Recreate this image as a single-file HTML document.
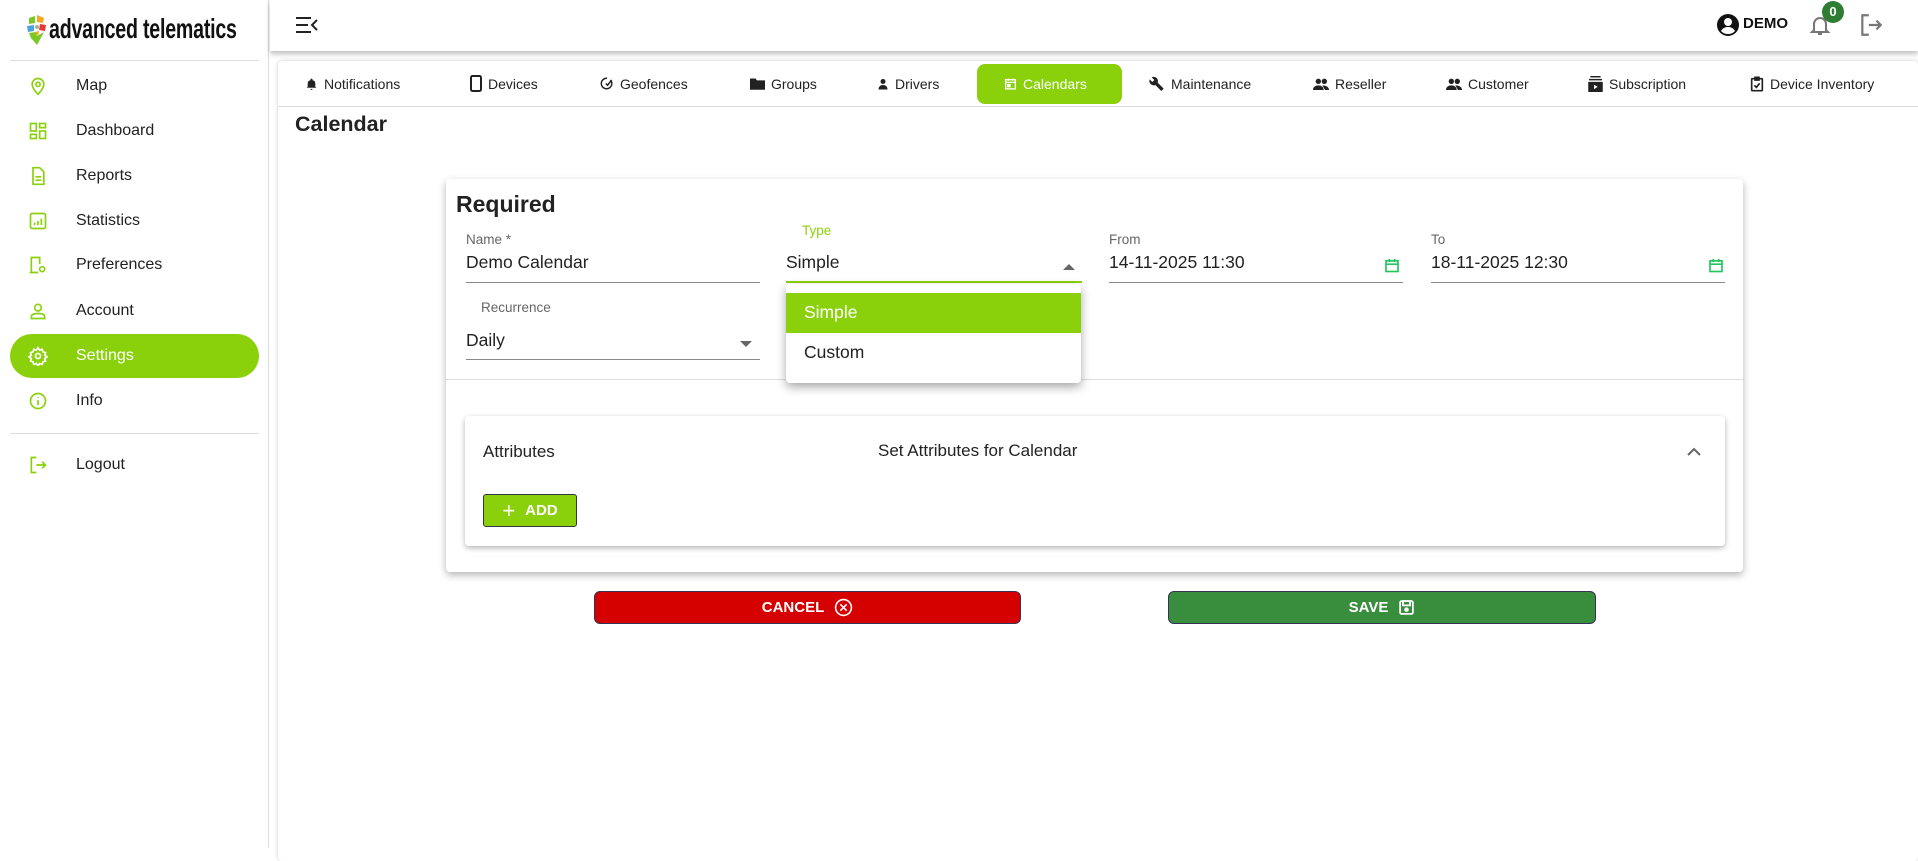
<!DOCTYPE html>
<html><head><meta charset="utf-8"><style>
*{box-sizing:border-box;margin:0;padding:0}
body{width:1918px;height:848px;overflow:hidden;background:#fff;font-family:"Liberation Sans",sans-serif;color:#222;position:relative}
.abs{position:absolute}
.side{left:0;top:0;width:269px;height:848px;border-right:1px solid #ddd;background:#fff}
.mi{position:absolute;left:0;width:269px;height:44px;display:flex;align-items:center;font-size:16px;color:#222}
.mi svg{position:absolute;left:28px}
.mi span{position:absolute;left:76px}
.hdr{left:270px;top:0;width:1648px;height:51px;background:#fff;box-shadow:0 3px 5px rgba(0,0,0,.25)}
.panel{left:278px;top:61px;width:1640px;height:800px;background:#fff;box-shadow:0 0 4px rgba(0,0,0,.2);border-radius:4px}
.tab{position:absolute;top:0;height:45px;display:flex;align-items:center;font-size:14px;color:#222;gap:6px}
.lbl{position:absolute;font-size:13.5px;color:#666}
.val{position:absolute;font-size:17.5px;color:#222}
.ul{position:absolute;height:1px;background:#888}
</style></head><body>
<div class="abs side">
 <div class="abs" style="left:27px;top:14px">
  <svg width="20" height="32" viewBox="0 0 20 32"><path d="M2 4 L8 2 L8 9 L2 10Z" fill="#7cc823"/><path d="M10 1 L17 4 L16 9 L10 8Z" fill="#f5a623"/><path d="M0 12 L7 11 L7 17 L1 18Z" fill="#4aa3df"/><path d="M13 10 L19 11 L18 17 L12 16Z" fill="#e53935"/><circle cx="10" cy="13" r="2" fill="#aaa"/><path d="M2 19 L9 18 L10 22 L17 18 L10 31 L4 24Z" fill="#7cc823"/><path d="M8 18 L12 17 L11 22Z" fill="#f5a623"/></svg>
 </div>
 <div class="abs" style="left:49px;top:13px;font-size:28px;font-weight:bold;color:#111;transform:scaleX(.7);transform-origin:left;letter-spacing:-.3px;white-space:nowrap">advanced telematics</div>
 <div class="abs" style="left:10px;top:60px;width:249px;height:1px;background:#ddd"></div>
 <div class="mi" style="top:64px"><svg width="20" height="20" viewBox="0 0 24 24" fill="none" stroke="#8bd10b" stroke-width="2"><path d="M12 22s7-7 7-12a7 7 0 0 0-14 0c0 5 7 12 7 12z"/><circle cx="12" cy="10" r="2.5"/></svg><span>Map</span></div>
 <div class="mi" style="top:109px"><svg width="20" height="20" viewBox="0 0 24 24" fill="none" stroke="#8bd10b" stroke-width="2"><rect x="3" y="3" width="7" height="9"/><rect x="14" y="3" width="7" height="5"/><rect x="14" y="12" width="7" height="9"/><rect x="3" y="16" width="7" height="5"/></svg><span>Dashboard</span></div>
 <div class="mi" style="top:154px"><svg width="20" height="20" viewBox="0 0 24 24" fill="none" stroke="#8bd10b" stroke-width="2"><path d="M6 2h8l5 5v15H6z"/><path d="M9 13h7M9 17h7"/></svg><span>Reports</span></div>
 <div class="mi" style="top:199px"><svg width="20" height="20" viewBox="0 0 24 24" fill="none" stroke="#8bd10b" stroke-width="2"><rect x="3" y="3" width="18" height="18" rx="2"/><path d="M8 17v-3M12 17v-5M16 17V9"/></svg><span>Statistics</span></div>
 <div class="mi" style="top:243px"><svg width="20" height="20" viewBox="0 0 24 24" fill="none" stroke="#8bd10b" stroke-width="2"><path d="M4 21V3h10v8M2 21h10"/><circle cx="17" cy="17" r="3"/></svg><span>Preferences</span></div>
 <div class="mi" style="top:289px"><svg width="20" height="20" viewBox="0 0 24 24" fill="none" stroke="#8bd10b" stroke-width="2"><circle cx="12" cy="8" r="4"/><path d="M4 21v-2c0-3 4-4 8-4s8 1 8 4v2z"/></svg><span>Account</span></div>
 <div class="abs" style="left:10px;top:334px;width:249px;height:44px;background:#8bd10b;border-radius:22px"></div>
 <div class="mi" style="top:334px;color:#fff"><svg width="20" height="20" viewBox="0 0 24 24" fill="none" stroke="#fff" stroke-width="2"><circle cx="12" cy="12" r="3"/><path d="M12 2l2 3 3-1 1 3 3 1-1 3 3 2-3 2 1 3-3 1-1 3-3-1-2 3-2-3-3 1-1-3-3-1 1-3-3-2 3-2-1-3 3-1 1-3 3 1z"/></svg><span>Settings</span></div>
 <div class="mi" style="top:379px"><svg width="20" height="20" viewBox="0 0 24 24" fill="none" stroke="#8bd10b" stroke-width="2"><circle cx="12" cy="12" r="9"/><path d="M12 11v6M12 7v1"/></svg><span>Info</span></div>
 <div class="abs" style="left:10px;top:433px;width:249px;height:1px;background:#ddd"></div>
 <div class="mi" style="top:443px"><svg width="20" height="20" viewBox="0 0 24 24" fill="none" stroke="#8bd10b" stroke-width="2"><path d="M10 3H4v18h6M10 12h11M17 8l4 4-4 4"/></svg><span>Logout</span></div>
</div>
<div class="abs hdr">
 <svg class="abs" style="left:25px;top:16px" width="24" height="18" viewBox="0 0 24 18" fill="none" stroke="#222" stroke-width="2"><path d="M1 2h15M1 9h12M1 16h15M22 4l-5 5 5 5"/></svg>
 <svg class="abs" style="left:1446px;top:13px" width="24" height="24" viewBox="0 0 24 24"><circle cx="12" cy="12" r="11" fill="#111"/><circle cx="12" cy="9" r="4" fill="#fff"/><path d="M5 18c2-3 4-4 7-4s5 1 7 4c-2 2-4 3-7 3s-5-1-7-3z" fill="#fff"/></svg>
 <div class="abs" style="left:1473px;top:15px;font-size:15px;font-weight:bold;color:#111">DEMO</div>
 <svg class="abs" style="left:1538px;top:13px" width="24" height="24" viewBox="0 0 24 24" fill="none" stroke="#777" stroke-width="2"><path d="M6 17V11a6 6 0 0 1 12 0v6l2 2H4z"/><path d="M10 21h4"/></svg>
 <div class="abs" style="left:1552px;top:1px;width:22px;height:22px;border-radius:11px;background:#2e7d32;color:#fff;font-size:13px;font-weight:bold;text-align:center;line-height:22px">0</div>
 <svg class="abs" style="left:1588px;top:12px" width="26" height="26" viewBox="0 0 24 24" fill="none" stroke="#777" stroke-width="2"><path d="M10 3H4v18h6M10 12h11M17 8l4 4-4 4"/></svg>
</div>
<div class="abs panel">
 <div class="abs" style="left:0;top:45px;width:1640px;height:1px;background:#ddd"></div>
 <div class="abs" style="left:699px;top:3px;width:145px;height:40px;background:#8bd10b;border-radius:8px"></div>
 <div class="tab" style="left:27px"><svg width="13" height="14" viewBox="0 0 24 24"><path d="M12 2a2 2 0 0 0-2 2v1a6 6 0 0 0-5 6v6l-2 2h18l-2-2v-6a6 6 0 0 0-5-6V4a2 2 0 0 0-2-2zM10 21h4a2 2 0 0 1-4 0z" fill="#222"/></svg>Notifications</div>
 <div class="tab" style="left:192px"><svg width="12" height="17" viewBox="0 0 12 17" fill="none" stroke="#222" stroke-width="2"><rect x="1" y="1" width="10" height="15" rx="1.5"/></svg>Devices</div>
 <div class="tab" style="left:322px"><svg width="14" height="15" viewBox="0 0 24 24" fill="none" stroke="#222" stroke-width="2.5"><path d="M12 3a9 9 0 1 0 6 3M10 12l3 3 7-9"/></svg>Geofences</div>
 <div class="tab" style="left:472px"><svg width="15" height="13" viewBox="0 0 24 20"><path d="M0 2h9l2 3h13v15H0z" fill="#222"/></svg>Groups</div>
 <div class="tab" style="left:599px"><svg width="12" height="14" viewBox="0 0 24 24"><circle cx="12" cy="7" r="5" fill="#222"/><path d="M3 23c0-6 4-9 9-9s9 3 9 9z" fill="#222"/></svg>Drivers</div>
 <div class="tab" style="left:726px;color:#fff"><svg width="13" height="14" viewBox="0 0 24 24" fill="none" stroke="#fff" stroke-width="2.5"><rect x="3" y="4" width="18" height="17"/><path d="M3 9h18M8 2v4M16 2v4"/><rect x="7" y="13" width="4" height="4" fill="#fff"/></svg>Calendars</div>
 <div class="tab" style="left:871px"><svg width="16" height="16" viewBox="0 0 24 24"><path d="M22 19l-9-9c1-2 .5-5-1.5-7S6 1 4 2l4 4-3 3-4-4c-1 2-.5 5 1.5 7s5 2.5 7 1.5l9 9z" fill="#222"/></svg>Maintenance</div>
 <div class="tab" style="left:1035px"><svg width="16" height="12" viewBox="0 0 24 18"><circle cx="8" cy="5" r="4" fill="#222"/><circle cx="17" cy="5" r="4" fill="#222"/><path d="M0 18c0-5 4-7 8-7s8 2 8 7zM14 11c5 0 10 2 10 7h-6z" fill="#222"/></svg>Reseller</div>
 <div class="tab" style="left:1168px"><svg width="16" height="12" viewBox="0 0 24 18"><circle cx="8" cy="5" r="4" fill="#222"/><circle cx="17" cy="5" r="4" fill="#222"/><path d="M0 18c0-5 4-7 8-7s8 2 8 7zM14 11c5 0 10 2 10 7h-6z" fill="#222"/></svg>Customer</div>
 <div class="tab" style="left:1310px"><svg width="15" height="16" viewBox="0 0 20 22"><rect x="3" y="0" width="14" height="2" fill="#222"/><rect x="1" y="4" width="18" height="2" fill="#222"/><rect x="0" y="8" width="20" height="14" rx="1" fill="#222"/><path d="M8 12v6l5-3z" fill="#fff"/></svg>Subscription</div>
 <div class="tab" style="left:1472px"><svg width="14" height="16" viewBox="0 0 20 24" fill="none" stroke="#222" stroke-width="2.5"><rect x="2" y="4" width="16" height="18" rx="1"/><path d="M7 2h6v4H7zM6 14l3 3 5-6"/></svg>Device Inventory</div>
 <div class="abs" style="left:17px;top:51px;font-size:21.5px;font-weight:bold;color:#222">Calendar</div>
</div>
<div class="abs" style="left:446px;top:179px;width:1297px;height:393px;background:#fff;border-radius:4px;box-shadow:0 3px 8px rgba(0,0,0,.3)">
 <div class="abs" style="left:10px;top:12px;font-size:23px;font-weight:bold;color:#222">Required</div>
 <div class="lbl" style="left:20px;top:53px">Name *</div>
 <div class="val" style="left:20px;top:73px">Demo Calendar</div>
 <div class="ul" style="left:20px;top:103px;width:294px"></div>
 <div class="lbl" style="left:356px;top:44px;color:#8bd10b">Type</div>
 <div class="val" style="left:340px;top:73px">Simple</div>
 <svg class="abs" style="left:617px;top:84px" width="12" height="7"><path d="M0 7L6 1L12 7z" fill="#666"/></svg>
 <div class="abs" style="left:340px;top:102px;width:296px;height:2px;background:#8bd10b"></div>
 <div class="lbl" style="left:663px;top:53px">From</div>
 <div class="val" style="left:663px;top:73px">14-11-2025 11:30</div>
 <svg class="abs" style="left:938px;top:78px" width="16" height="17" viewBox="0 0 24 24" fill="none" stroke="#22c55e" stroke-width="2.5"><rect x="3" y="5" width="18" height="16"/><path d="M3 10h18M8 2v5M16 2v5"/></svg>
 <div class="ul" style="left:663px;top:103px;width:294px"></div>
 <div class="lbl" style="left:985px;top:53px">To</div>
 <div class="val" style="left:985px;top:73px">18-11-2025 12:30</div>
 <svg class="abs" style="left:1262px;top:78px" width="16" height="17" viewBox="0 0 24 24" fill="none" stroke="#22c55e" stroke-width="2.5"><rect x="3" y="5" width="18" height="16"/><path d="M3 10h18M8 2v5M16 2v5"/></svg>
 <div class="ul" style="left:985px;top:103px;width:294px"></div>
 <div class="lbl" style="left:35px;top:121px">Recurrence</div>
 <div class="val" style="left:20px;top:151px">Daily</div>
 <svg class="abs" style="left:294px;top:162px" width="12" height="7"><path d="M0 0L6 6L12 0z" fill="#666"/></svg>
 <div class="ul" style="left:20px;top:180px;width:294px"></div>
 <div class="abs" style="left:0;top:200px;width:1297px;height:1px;background:#ddd"></div>
 <div class="abs" style="left:19px;top:237px;width:1260px;height:130px;background:#fff;border-radius:4px;box-shadow:0 2px 6px rgba(0,0,0,.3)">
  <div class="abs" style="left:18px;top:26px;font-size:17px">Attributes</div>
  <div class="abs" style="left:413px;top:25px;font-size:17px">Set Attributes for Calendar</div>
  <svg class="abs" style="left:1222px;top:31px" width="14" height="9" viewBox="0 0 14 9" fill="none" stroke="#666" stroke-width="2"><path d="M1 8l6-6 6 6"/></svg>
  <div class="abs" style="left:18px;top:78px;width:94px;height:33px;background:#8bd10b;border:1px solid #334;border-radius:3px;color:#fff;font-size:15px;font-weight:bold;display:flex;align-items:center;justify-content:center;gap:10px"><span style="font-size:22px;font-weight:normal">+</span>ADD</div>
 </div>
</div>
<div class="abs" style="left:594px;top:591px;width:427px;height:33px;background:#d50000;border:1px solid #335;border-radius:6px;color:#fff;font-size:15px;font-weight:bold;display:flex;align-items:center;justify-content:center;gap:10px">CANCEL <svg width="19" height="19" viewBox="0 0 24 24" fill="none" stroke="#fff" stroke-width="2"><circle cx="12" cy="12" r="10"/><path d="M8 8l8 8M16 8l-8 8"/></svg></div>
<div class="abs" style="left:1168px;top:591px;width:428px;height:33px;background:#388e3c;border:1px solid #335;border-radius:6px;color:#fff;font-size:15px;font-weight:bold;display:flex;align-items:center;justify-content:center;gap:10px">SAVE <svg width="17" height="17" viewBox="0 0 24 24" fill="none" stroke="#fff" stroke-width="2.5"><rect x="3" y="3" width="18" height="18" rx="2"/><rect x="7" y="3" width="10" height="6"/><circle cx="12" cy="15" r="2" fill="#fff"/></svg></div>
<div class="abs" style="left:786px;top:284px;width:295px;height:99px;background:#fff;border-radius:4px;box-shadow:0 4px 10px rgba(0,0,0,.35)">
 <div class="abs" style="left:0;top:9px;width:295px;height:40px;background:#8bd10b"></div>
 <div class="abs" style="left:18px;top:18px;font-size:17.5px;color:#fff">Simple</div>
 <div class="abs" style="left:18px;top:58px;font-size:17.5px;color:#222">Custom</div>
</div>
</body></html>
